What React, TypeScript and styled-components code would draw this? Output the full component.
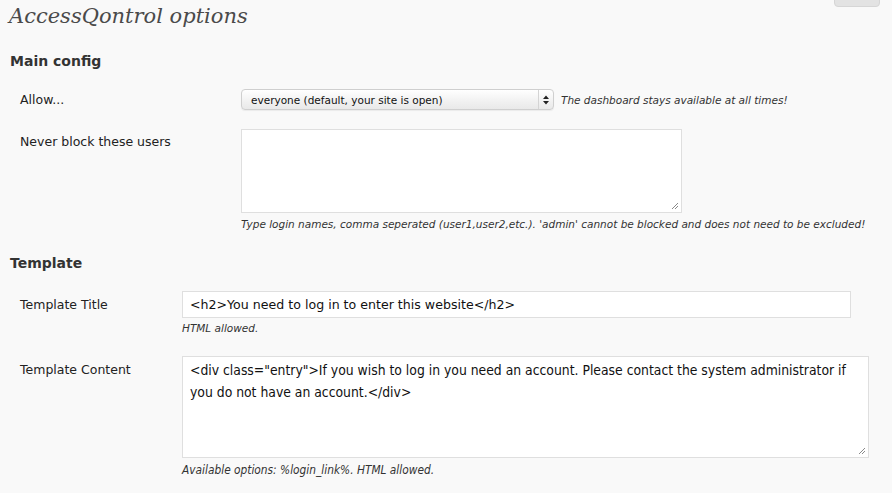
import React from "react";
import styled, { createGlobalStyle } from "styled-components";

const Global = createGlobalStyle`
  html, body { margin: 0; padding: 0; background: #f9f9f9; }
  body { font-family: "DejaVu Sans", "Noto Sans", sans-serif; color: #333; }
`;

const Page = styled.div`
  position: relative;
  width: 892px;
  height: 493px;
  overflow: hidden;
  background: #f9f9f9;
`;

const ScreenTab = styled.div`
  position: absolute;
  top: -6px;
  right: 12px;
  width: 44px;
  height: 11px;
  background: #e3e3e3;
  border: 1px solid #d6d6d6;
  border-radius: 0 0 4px 4px;
`;

const Title = styled.h2`
  margin: 0;
  padding: 1px 0 0 9px;
  font-family: "DejaVu Serif", Georgia, "Liberation Serif", serif;
  font-style: italic;
  font-weight: normal;
  font-size: 21px;
  line-height: 30px;
  color: #4a4a4a;
`;

const SectionTitle = styled.h3<{ $top: number }>`
  margin: ${(p) => p.$top}px 0 0 10px;
  font-size: 14px;
  font-weight: bold;
  line-height: 20px;
  color: #333;
`;

const FormGrid = styled.div<{ $col: number; $top: number }>`
  display: grid;
  grid-template-columns: ${(p) => p.$col}px 1fr;
  margin-top: ${(p) => p.$top}px;
`;

const Label = styled.div<{ $pt: number }>`
  padding: ${(p) => p.$pt}px 0 0 20px;
  font-size: 12.5px;
  color: #222;
  line-height: 16px;
`;

const Field = styled.div<{ $pb: number }>`
  padding-bottom: ${(p) => p.$pb}px;
  display: flex;
  flex-direction: column;
`;

const SelectRow = styled.div`
  display: flex;
  align-items: center;
  gap: 7px;
`;

const Select = styled.div`
  width: 311px;
  height: 19px;
  border: 1px solid #cfcfcf;
  border-radius: 4px;
  background: linear-gradient(#ffffff, #f1f1f1 60%, #e9e9e9);
  box-shadow: 0 1px 1px rgba(0, 0, 0, 0.06);
  display: flex;
  align-items: center;
  font-size: 10.5px;
  color: #111;
`;

const SelectText = styled.span`
  padding-left: 9px;
  flex: 1;
`;

const SelectArrow = styled.span`
  width: 14px;
  height: 19px;
  border-left: 1px solid #d4d4d4;
  display: flex;
  align-items: center;
  justify-content: center;
`;

const Hint = styled.div<{ $condensed?: boolean; $mt: number }>`
  margin-top: ${(p) => p.$mt}px;
  font-style: italic;
  font-size: ${(p) => (p.$condensed ? 11.8 : 10.5)}px;
  color: #333;
  line-height: 14px;
  white-space: nowrap;
  font-family: ${(p) =>
    p.$condensed ? '"DejaVu Sans Condensed", "DejaVu Sans", sans-serif' : '"DejaVu Sans", sans-serif'};
  font-stretch: ${(p) => (p.$condensed ? "condensed" : "normal")};
`;

const Area = styled.div<{ $w: number; $h: number; $condensed?: boolean }>`
  position: relative;
  width: ${(p) => p.$w}px;
  height: ${(p) => p.$h}px;
  box-sizing: border-box;
  background: #fff;
  border: 1px solid #dfdfdf;
  padding: 2px 7px;
  font-size: ${(p) => (p.$condensed ? 13.8 : 12.5)}px;
  line-height: 22px;
  color: #111;
  font-family: ${(p) =>
    p.$condensed ? '"DejaVu Sans Condensed", "DejaVu Sans", sans-serif' : '"DejaVu Sans", sans-serif'};
  font-stretch: ${(p) => (p.$condensed ? "condensed" : "normal")};
`;

const Grip = styled.svg`
  position: absolute;
  right: 2px;
  bottom: 2px;
`;

const Input = styled.div`
  width: 669px;
  height: 27px;
  box-sizing: border-box;
  background: #fff;
  border: 1px solid #dfdfdf;
  padding: 0 7px;
  display: flex;
  align-items: center;
  font-size: 12.6px;
  color: #111;
`;

const ResizeGrip = () => (
  <Grip width="8" height="8" viewBox="0 0 8 8">
    <path d="M7 1 L1 7 M7 4 L4 7" stroke="#8a8a8a" strokeWidth="1" />
  </Grip>
);

export default function App() {
  return (
    <Page>
      <Global />
      <ScreenTab />
      <Title>AccessQontrol options</Title>
      <SectionTitle $top={20}>Main config</SectionTitle>
      <FormGrid $col={241} $top={18}>
        <Label $pt={3}>Allow...</Label>
        <Field $pb={19}>
          <SelectRow>
            <Select>
              <SelectText>everyone (default, your site is open)</SelectText>
              <SelectArrow>
                <svg width="6" height="10" viewBox="0 0 6 10">
                  <path d="M0 4 L3 0.5 L6 4 Z M0 6 L3 9.5 L6 6 Z" fill="#222" />
                </svg>
              </SelectArrow>
            </Select>
            <Hint $mt={0}>The dashboard stays available at all times!</Hint>
          </SelectRow>
        </Field>
        <Label $pt={5}>Never block these users</Label>
        <Field $pb={0}>
          <Area $w={441} $h={84}>
            <ResizeGrip />
          </Area>
          <Hint $mt={4}>
            Type login names, comma seperated (user1,user2,etc.). 'admin' cannot be blocked and does not need to be excluded!
          </Hint>
        </Field>
      </FormGrid>
      <SectionTitle $top={22}>Template</SectionTitle>
      <FormGrid $col={182} $top={18}>
        <Label $pt={6}>Template Title</Label>
        <Field $pb={21}>
          <Input>&lt;h2&gt;You need to log in to enter this website&lt;/h2&gt;</Input>
          <Hint $mt={3}>HTML allowed.</Hint>
        </Field>
        <Label $pt={6}>Template Content</Label>
        <Field $pb={0}>
          <Area $w={687} $h={102} $condensed>
            &lt;div class="entry"&gt;If you wish to log in you need an account. Please contact the system administrator if
            you do not have an account.&lt;/div&gt;
            <ResizeGrip />
          </Area>
          <Hint $condensed $mt={5}>
            Available options: %login_link%. HTML allowed.
          </Hint>
        </Field>
      </FormGrid>
    </Page>
  );
}
